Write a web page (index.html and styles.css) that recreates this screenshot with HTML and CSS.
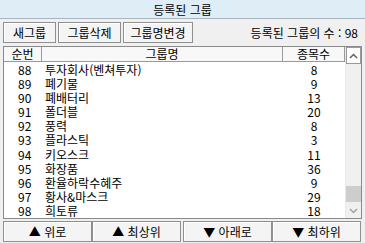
FILE: index.html
```html
<!DOCTYPE html>
<html lang="ko">
<head>
    <meta charset="UTF-8">
    <title>등록된 그룹</title>
    <link rel="stylesheet" href="styles.css">
</head>
<body>

    <div class="window">
        <!-- 제목 -->
        <div class="title">등록된 그룹</div>

        <!-- 상단 버튼 -->
        <div class="toolbar">
            <button class="btn btn-new">새그룹</button>
            <button class="btn btn-del">그룹삭제</button>
            <button class="btn btn-ren">그룹명변경</button>
            <span class="count">등록된 그룹의 수 : 98</span>
        </div>

        <!-- 그룹 목록 -->
        <div class="list">
            <div class="table">
                <div class="head">
                    <div class="col-no">순번</div>
                    <div class="col-name">그룹명</div>
                    <div class="col-cnt">종목수</div>
                </div>
                <div class="rows">
                    <div class="row"><span class="col-no">88</span><span class="col-name">투자회사(벤쳐투자)</span><span class="col-cnt">8</span></div>
                    <div class="row"><span class="col-no">89</span><span class="col-name">폐기물</span><span class="col-cnt">9</span></div>
                    <div class="row"><span class="col-no">90</span><span class="col-name">폐배터리</span><span class="col-cnt">13</span></div>
                    <div class="row"><span class="col-no">91</span><span class="col-name">폴더블</span><span class="col-cnt">20</span></div>
                    <div class="row"><span class="col-no">92</span><span class="col-name">풍력</span><span class="col-cnt">8</span></div>
                    <div class="row"><span class="col-no">93</span><span class="col-name">플라스틱</span><span class="col-cnt">3</span></div>
                    <div class="row"><span class="col-no">94</span><span class="col-name">키오스크</span><span class="col-cnt">11</span></div>
                    <div class="row"><span class="col-no">95</span><span class="col-name">화장품</span><span class="col-cnt">36</span></div>
                    <div class="row"><span class="col-no">96</span><span class="col-name">환율하락수혜주</span><span class="col-cnt">9</span></div>
                    <div class="row"><span class="col-no">97</span><span class="col-name">황사&amp;마스크</span><span class="col-cnt">29</span></div>
                    <div class="row"><span class="col-no">98</span><span class="col-name">희토류</span><span class="col-cnt">18</span></div>
                </div>
            </div>
            <div class="scrollbar">
                <div class="arrow arrow-up">
                    <svg width="9" height="6" viewBox="0 0 9 6"><path d="M1 5 L4.5 1.5 L8 5" fill="none" stroke="#606060" stroke-width="1.5"/></svg>
                </div>
                <div class="track"><div class="thumb"></div></div>
                <div class="arrow arrow-down">
                    <svg width="9" height="6" viewBox="0 0 9 6"><path d="M1 1 L4.5 4.5 L8 1" fill="none" stroke="#a0a0a0" stroke-width="1.5"/></svg>
                </div>
            </div>
        </div>

        <!-- 하단 이동 버튼 -->
        <div class="nav">
            <button class="nav-btn">▲ 위로</button>
            <button class="nav-btn">▲ 최상위</button>
            <button class="nav-btn">▼ 아래로</button>
            <button class="nav-btn">▼ 최하위</button>
        </div>
    </div>

</body>
</html>
```

FILE: styles.css
```css
body {
    margin: 0;
    font-family: "Noto Sans CJK KR", "DejaVu Sans", sans-serif;
    font-size: 12px;
    color: #000;
    background-color: #f0f0f0;
}
.window {
    width: 365px;
    height: 243px;
    background-color: #f0f0f0;
    display: flex;
    flex-direction: column;
    overflow: hidden;
}
.title {
    height: 19px;
    line-height: 19px;
    text-align: center;
    background-color: #dfedf6;
    border-bottom: 1px solid #a9b4bc;
    box-sizing: border-box;
}
.toolbar {
    display: flex;
    align-items: center;
    gap: 2px;
    padding: 2px 3px 0 3px;
    height: 23px;
}
.btn, .nav-btn {
    font-family: inherit;
    font-size: 12px;
    line-height: 1;
    padding: 0;
    margin: 0;
    color: #000;
    background-color: #f4f4f4;
    border: 1px solid #8f8f8f;
    box-shadow: inset 1px 1px 0 #fff;
    cursor: pointer;
}
.btn {
    height: 21px;
}
.btn-new {
    width: 53px;
}
.btn-del {
    width: 63px;
}
.btn-ren {
    width: 70px;
}
.count {
    margin-left: auto;
    padding-right: 4px;
}
.list {
    margin: 2px 3px 0 3px;
    height: 173px;
    border: 1px solid #8a8a8a;
    box-sizing: border-box;
    background-color: #fff;
    display: flex;
}
.table {
    flex: 1;
}
.head {
    display: flex;
    height: 15px;
    line-height: 14px;
    background-color: #f8f8f8;
    border-bottom: 1px solid #9a9a9a;
    box-sizing: border-box;
}
.head div {
    text-align: center;
    border-right: 1px solid #9a9a9a;
    box-sizing: border-box;
}
.col-no {
    width: 38px;
}
.col-name {
    width: 241px;
}
.col-cnt {
    width: 62px;
}
.rows {
    padding-top: 1px;
}
.row {
    display: flex;
    height: 14.1px;
    line-height: 14px;
}
.row .col-no {
    padding-left: 14px;
    box-sizing: border-box;
}
.row .col-name {
    padding-left: 3px;
    box-sizing: border-box;
}
.row .col-cnt {
    text-align: center;
}
.scrollbar {
    width: 17px;
    display: flex;
    flex-direction: column;
    background-color: #f0f0f0;
    border-left: 1px solid #e8e8e8;
}
.arrow {
    display: flex;
    align-items: center;
    justify-content: center;
}
.arrow-up {
    height: 17px;
    border: 1px solid #9a9a9a;
    background-color: #fff;
    box-sizing: border-box;
}
.arrow-down {
    height: 14px;
}
.track {
    flex: 1;
    display: flex;
    flex-direction: column;
    justify-content: flex-end;
}
.thumb {
    height: 16px;
    margin-bottom: 2px;
    background-color: #cdcdcd;
}
.nav {
    display: flex;
    padding: 2px 3px 0 3px;
}
.nav-btn {
    width: 89px;
    height: 21px;
}
.nav-btn:nth-child(3) {
    margin-left: 2px;
}
```
